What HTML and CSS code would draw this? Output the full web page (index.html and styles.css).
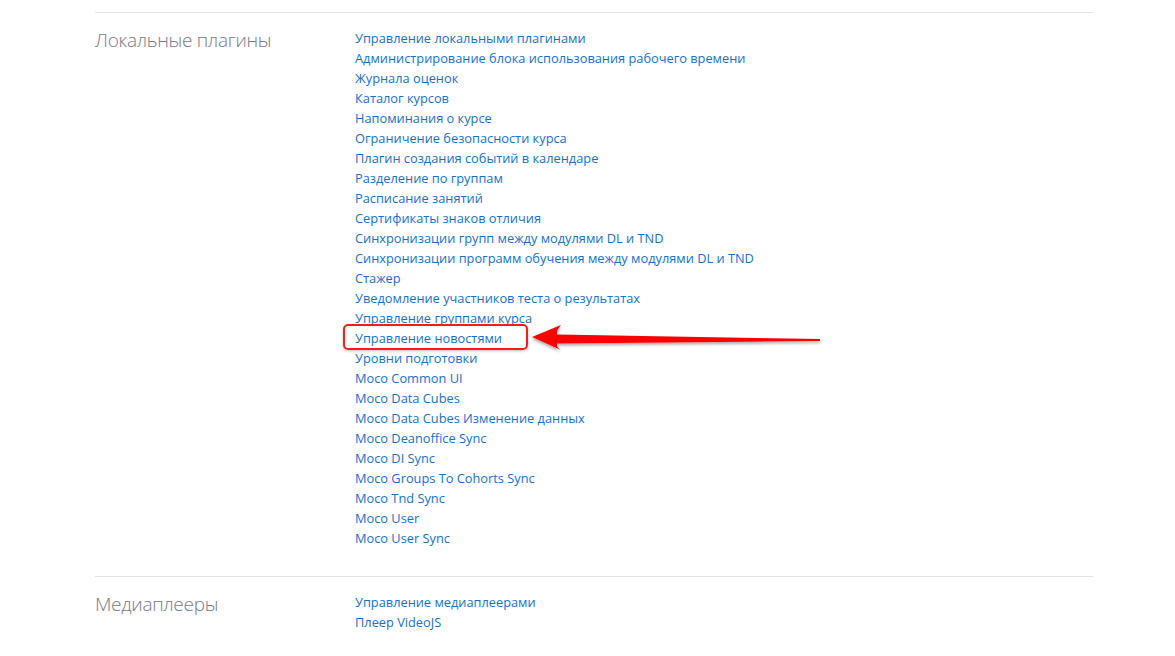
FILE: index.html
```html
<!DOCTYPE html>
<html lang="ru">
<head>
  <meta charset="UTF-8" />
  <meta name="viewport" content="width=device-width, initial-scale=1.0" />
  <title>Плагины</title>
  <link rel="stylesheet" href="styles.css">
</head>
<body>
  <div class="page">
    <div class="category">
      <h3 class="category-title">Локальные плагины</h3>
      <ul class="plugin-list">
        <li><a href="#">Управление локальными плагинами</a></li>
        <li><a href="#">Администрирование блока использования рабочего времени</a></li>
        <li><a href="#">Журнала оценок</a></li>
        <li><a href="#">Каталог курсов</a></li>
        <li><a href="#">Напоминания о курсе</a></li>
        <li><a href="#">Ограничение безопасности курса</a></li>
        <li><a href="#">Плагин создания событий в календаре</a></li>
        <li><a href="#">Разделение по группам</a></li>
        <li><a href="#">Расписание занятий</a></li>
        <li><a href="#">Сертификаты знаков отличия</a></li>
        <li><a href="#">Синхронизации групп между модулями DL и TND</a></li>
        <li><a href="#">Синхронизации программ обучения между модулями DL и TND</a></li>
        <li><a href="#">Стажер</a></li>
        <li><a href="#">Уведомление участников теста о результатах</a></li>
        <li><a href="#">Управление группами курса</a></li>
        <li class="highlight"><a href="#">Управление новостями</a>
          <svg class="pointer" width="300" height="36" viewBox="0 0 300 36">
            <defs>
              <filter id="shadow" x="-10%" y="-50%" width="120%" height="200%">
                <feDropShadow dx="0" dy="2" stdDeviation="1.5" flood-color="#000" flood-opacity="0.35" />
              </filter>
            </defs>
            <path d="M7,17 L36,5 Q31,11 32,14.5 L295,19 L295,21 L32,23.5 Q31,27 36,30 Z" fill="#ff0000" filter="url(#shadow)" />
          </svg>
        </li>
        <li><a href="#">Уровни подготовки</a></li>
        <li><a href="#">Moco Common UI</a></li>
        <li><a href="#">Moco Data Cubes</a></li>
        <li><a href="#">Moco Data Cubes Изменение данных</a></li>
        <li><a href="#">Moco Deanoffice Sync</a></li>
        <li><a href="#">Moco DI Sync</a></li>
        <li><a href="#">Moco Groups To Cohorts Sync</a></li>
        <li><a href="#">Moco Tnd Sync</a></li>
        <li><a href="#">Moco User</a></li>
        <li><a href="#">Moco User Sync</a></li>
      </ul>
    </div>
    <div class="category">
      <h3 class="category-title">Медиаплееры</h3>
      <ul class="plugin-list">
        <li><a href="#">Управление медиаплеерами</a></li>
        <li><a href="#">Плеер VideoJS</a></li>
      </ul>
    </div>
  </div>
</body>
</html>
```

FILE: styles.css
```css
body {
  margin: 0;
  background: #fff;
  font-family: "Open Sans", "Noto Sans", sans-serif;
  font-size: 12.8px;
}

.page {
  width: 998px;
  margin-left: 95px;
}

.category {
  display: grid;
  grid-template-columns: 260px 1fr;
  border-top: 1px solid #e2e2e2;
  padding: 15px 0 28px;
  margin-top: 12px;
}

.category + .category {
  margin-top: 0;
}

.category-title {
  margin: 0;
  font-size: 19px;
  font-weight: 300;
  letter-spacing: -0.3px;
  line-height: 24px;
  color: #7a7a8a;
}

.plugin-list {
  list-style: none;
  margin: 0;
  padding: 0;
}

.plugin-list li {
  line-height: 20px;
  height: 20px;
}

.plugin-list a {
  color: #1472d0;
  text-decoration: none;
}

.highlight {
  position: relative;
}

.highlight::after {
  content: "";
  position: absolute;
  left: -12px;
  top: -4px;
  width: 181px;
  height: 22px;
  border: 2px solid #ff1a1a;
  border-radius: 5px;
  box-shadow: 0 1px 3px rgba(0, 0, 0, 0.25);
}

.pointer {
  position: absolute;
  left: 170px;
  top: -8px;
}
```
